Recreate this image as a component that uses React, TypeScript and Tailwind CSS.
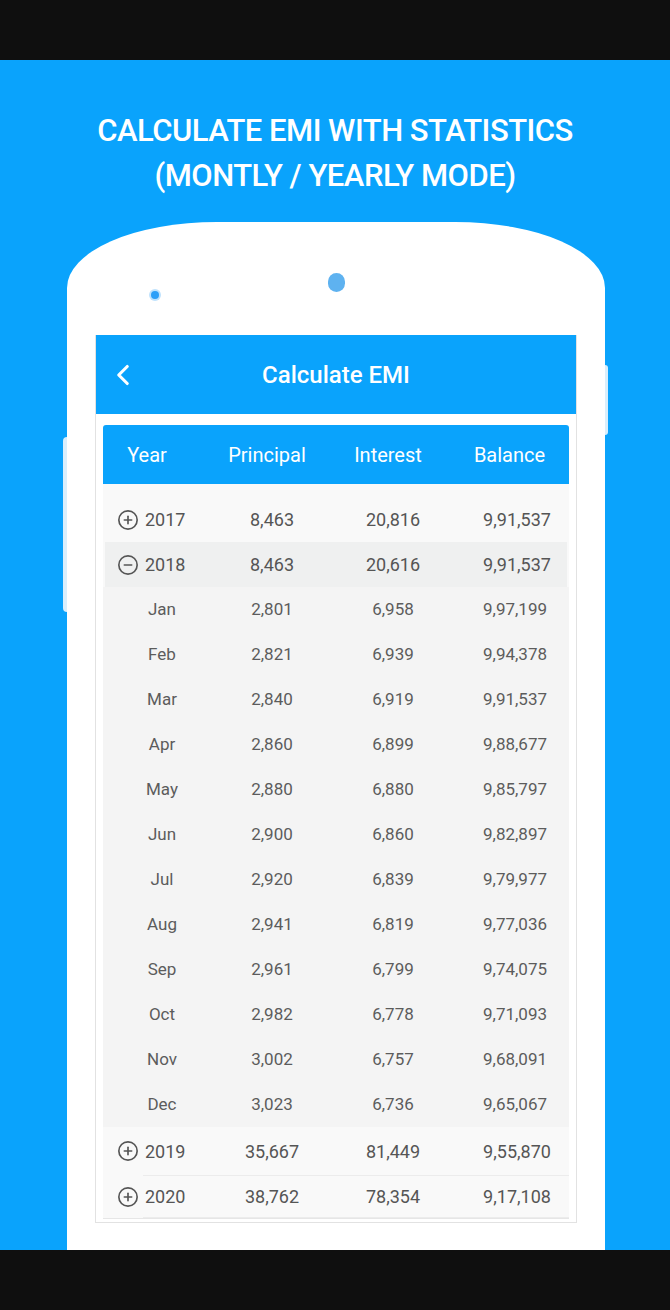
import { ChevronLeft, CirclePlus, CircleMinus } from "lucide-react";

const months = [
  ["Jan", "2,801", "6,958", "9,97,199"],
  ["Feb", "2,821", "6,939", "9,94,378"],
  ["Mar", "2,840", "6,919", "9,91,537"],
  ["Apr", "2,860", "6,899", "9,88,677"],
  ["May", "2,880", "6,880", "9,85,797"],
  ["Jun", "2,900", "6,860", "9,82,897"],
  ["Jul", "2,920", "6,839", "9,79,977"],
  ["Aug", "2,941", "6,819", "9,77,036"],
  ["Sep", "2,961", "6,799", "9,74,075"],
  ["Oct", "2,982", "6,778", "9,71,093"],
  ["Nov", "3,002", "6,757", "9,68,091"],
  ["Dec", "3,023", "6,736", "9,65,067"],
];

function YearRow({ year, p, i, b, open, className }: { year: string; p: string; i: string; b: string; open?: boolean; className?: string }) {
  return (
    <div className={`grid grid-cols-[100px_138px_104px_1fr] items-center text-[18px] text-[#555] ${className ?? ""}`}>
      <div className="flex items-center gap-[6px] pl-[14px]">
        {open ? (
          <CircleMinus size={22} strokeWidth={1.8} className="text-[#555]" />
        ) : (
          <CirclePlus size={22} strokeWidth={1.8} className="text-[#555]" />
        )}
        <span>{year}</span>
      </div>
      <div className="text-center">{p}</div>
      <div className="text-center">{i}</div>
      <div className="text-center pl-[20px]">{b}</div>
    </div>
  );
}

export default function App() {
  return (
    <div className="w-[670px] h-[1310px] flex flex-col bg-[#0f0f0f] font-['Roboto',sans-serif]">
      <div className="h-[60px] bg-[#0f0f0f]" />

      <div className="h-[1190px] bg-[#0aa3fc] overflow-hidden flex flex-col items-center">
        {/* heading */}
        <div className="pt-[48px] text-center text-white text-[31px] font-medium leading-[45px] tracking-[-0.5px]">
          <p>CALCULATE EMI WITH STATISTICS</p>
          <p>(MONTLY / YEARLY MODE)</p>
        </div>

        {/* phone */}
        <div className="relative mt-[24px] w-[538px] h-[1100px] bg-white rounded-t-[150px_66px] ml-[2px]">
          <div className="absolute left-[-4px] top-[215px] w-[4px] h-[175px] bg-[#d9eefc] rounded-l-sm" />
          <div className="absolute right-[-3px] top-[143px] w-[3px] h-[70px] bg-[#d9eefc] rounded-r-sm" />
          <div className="absolute left-[261px] top-[51px] w-[17px] h-[19px] rounded-full bg-[#5eb2f0]" />
          <div className="absolute left-[82px] top-[67px] w-[12px] h-[12px] rounded-full bg-[#bfe2fd] flex items-center justify-center">
            <div className="w-[8px] h-[8px] rounded-full bg-[#2c9ff8]" />
          </div>

          {/* screen */}
          <div className="mt-[113px] mx-[28px] w-[482px] h-[888px] border border-[#e2e2e2] border-t-0 bg-white">
            <div className="relative h-[79px] bg-[#0aa3fc] flex items-center justify-center">
              <ChevronLeft size={34} strokeWidth={2.2} className="absolute left-[10px] text-white" />
              <span className="text-white text-[24px] font-medium">Calculate EMI</span>
            </div>

            <div className="mx-[7px] mt-[11px] border-b border-[#e6e6e6]">
              <div className="h-[59px] bg-[#0aa3fc] rounded-t-[3px] grid grid-cols-[88px_152px_90px_1fr] items-center text-white text-[20px]">
                <div className="text-center">Year</div>
                <div className="text-center">Principal</div>
                <div className="text-center">Interest</div>
                <div className="text-center pl-[17px]">Balance</div>
              </div>

              <div className="bg-[#f9f9f9] pt-[13px]">
                <YearRow year="2017" p="8,463" i="20,816" b="9,91,537" className="h-[45px]" />
                <div className="mx-[2px] bg-[#eff0f0]">
                  <YearRow year="2018" p="8,463" i="20,616" b="9,91,537" open className="h-[45px] -mx-[2px]" />
                </div>
                <div className="bg-[#f4f4f4]">
                  {months.map((m) => (
                    <div key={m[0]} className="h-[45px] grid grid-cols-[100px_138px_104px_1fr] items-center text-[17px] text-[#5c5c5c]">
                      <div className="text-center pl-[18px]">{m[0]}</div>
                      <div className="text-center">{m[1]}</div>
                      <div className="text-center">{m[2]}</div>
                      <div className="text-center pl-[16px]">{m[3]}</div>
                    </div>
                  ))}
                </div>
                <YearRow year="2019" p="35,667" i="81,449" b="9,55,870" className="h-[48px]" />
                <div className="ml-[40px] border-t border-[#ececec]" />
                <YearRow year="2020" p="38,762" i="78,354" b="9,17,108" className="h-[41px]" />
                <div className="ml-[40px] border-t border-[#ececec]" />
              </div>
            </div>
          </div>
        </div>
      </div>

      <div className="h-[60px] bg-[#0f0f0f]" />
    </div>
  );
}
